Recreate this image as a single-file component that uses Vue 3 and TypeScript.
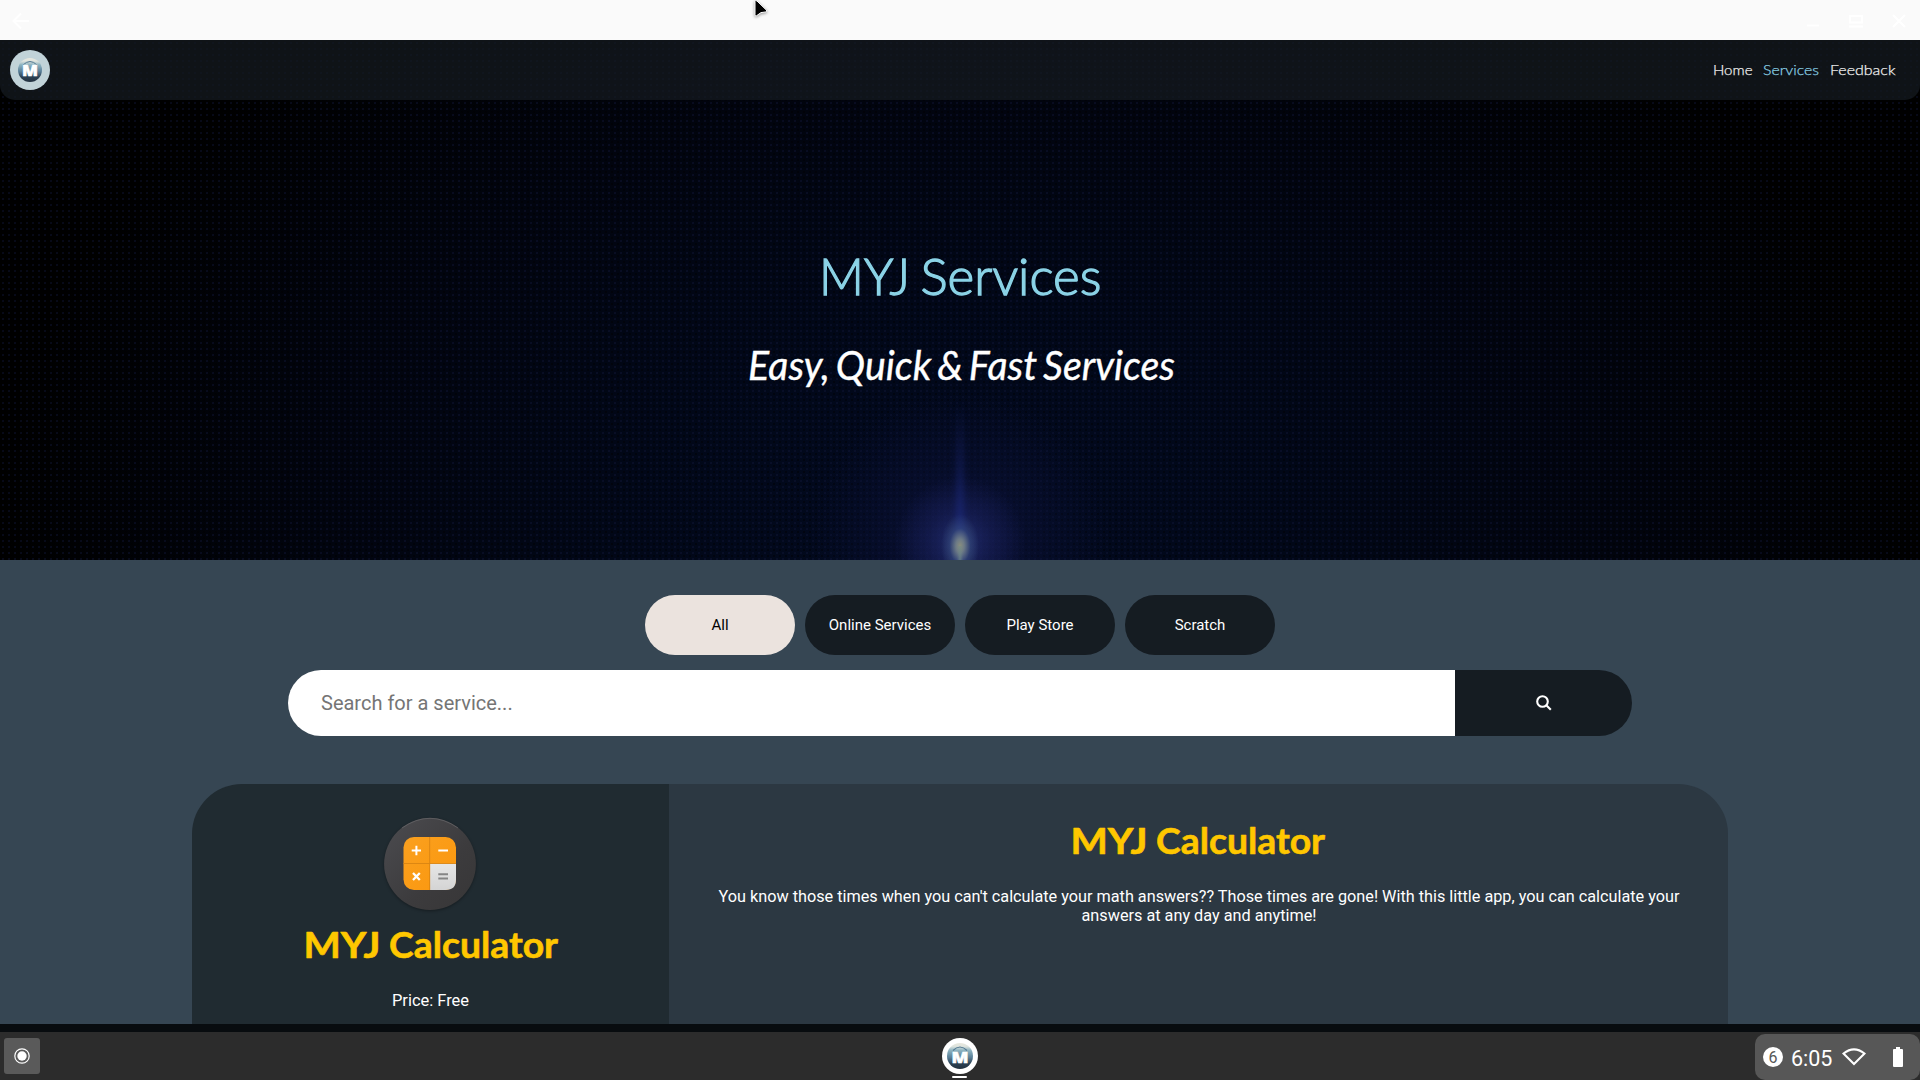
<script setup lang="ts">
import { ref } from 'vue'

interface NavLink { label: string; width: number; active?: boolean }

const links: NavLink[] = [
  { label: 'Home', width: 39.5 },
  { label: 'Services', width: 56, active: true },
  { label: 'Feedback', width: 65.5 },
]
const filters: string[] = ['All', 'Online Services', 'Play Store', 'Scratch']
const selected = ref('All')
const query = ref('')
</script>

<template>
  <div class="screen">
    <header class="titlebar">
      <svg class="back" width="18" height="18" viewBox="0 0 18 18"><path d="M17 9H2M9 1.500L1.500 9L9 16.500" /></svg>
      <div class="window-controls">
        <svg width="14" height="16" viewBox="0 0 14 16"><path d="M1 12.500H13" /></svg>
        <svg width="14" height="16" viewBox="0 0 14 16"><path d="M1 3H13V9.500H1ZM0 13.500H14" /></svg>
        <svg width="14" height="16" viewBox="0 0 14 16"><path d="M1 2L13 14M13 2L1 14" /></svg>
      </div>
      <svg class="cursor" width="20" height="22" viewBox="0 0 20 22">
        <path d="M2 1.500V14.800Q2 16.500 3.600 15.700L8 12.600L13 11.900Q14.600 11.300 13.300 10L4 1Q2 -0.500 2 1.500Z" />
      </svg>
    </header>

    <main class="page">
      <section class="hero">
        <div class="grid-dots"></div>
        <div class="glow"></div>
        <div class="beam"></div>
        <div class="core"></div>
        <nav class="nav">
          <svg width="40" height="40" viewBox="0 0 40 40">
            <defs>
              <linearGradient id="orb" x1="0" y1="0" x2="0" y2="1">
                <stop offset="0" stop-color="#e9e8de" />
                <stop offset=".13" stop-color="#dfe4de" />
                <stop offset=".28" stop-color="#8fb4c1" />
                <stop offset=".55" stop-color="#5b8199" />
                <stop offset=".8" stop-color="#2b4052" />
                <stop offset="1" stop-color="#22313f" />
              </linearGradient>
            </defs>
            <circle cx="20" cy="20" r="20" fill="#c1d3d8" />
            <circle cx="20" cy="20" r="12" fill="url(#orb)" />
            <path d="M13 15Q20 8 27 15" fill="none" stroke="#527891" stroke-width="1" />
            <text class="orb-letter" x="12" y="25.800" textLength="16" lengthAdjust="spacingAndGlyphs">M</text>
          </svg>
          <div class="links">
            <svg v-for="l in links" :key="l.label" :width="l.width" height="24" :class="{ active: l.active }">
              <text x="0" y="17.200" :textLength="l.width" lengthAdjust="spacingAndGlyphs">{{ l.label }}</text>
            </svg>
          </div>
        </nav>
        <div class="hero-copy">
          <svg class="title" width="286" height="60">
            <text x="0" y="45" textLength="91" lengthAdjust="spacingAndGlyphs">MYJ</text>
            <text x="101.500" y="45" textLength="181" lengthAdjust="spacingAndGlyphs">Services</text>
          </svg>
          <svg class="subtitle" width="427" height="50">
            <text x="0" y="34.700" textLength="427" lengthAdjust="spacingAndGlyphs">Easy, Quick &amp; Fast Services</text>
          </svg>
        </div>
      </section>

      <section class="content">
        <div class="filters">
          <button v-for="f in filters" :key="f" :class="{ on: f === selected }" @click="selected = f">{{ f }}</button>
        </div>
        <form class="search" @submit.prevent>
          <input v-model="query" type="text" placeholder="Search for a service..." />
          <button type="submit" aria-label="Search">
            <svg width="16" height="16" viewBox="0 0 16 16"><circle cx="6.500" cy="6.500" r="5.300" /><path d="M10.300 10.300L14.800 14.800" /></svg>
          </button>
        </form>
        <article class="card">
          <div class="card-side">
            <svg class="app-icon" width="100" height="100" viewBox="0 0 100 100">
              <defs>
                <linearGradient id="disc" x1="0" y1="0" x2="1" y2="1">
                  <stop offset="0" stop-color="#4c4c50" /><stop offset=".6" stop-color="#3c3b3d" /><stop offset="1" stop-color="#373637" />
                </linearGradient>
                <linearGradient id="amber" x1="0" y1="0" x2="1" y2="1">
                  <stop offset="0" stop-color="#faa01f" /><stop offset="1" stop-color="#fb970d" />
                </linearGradient>
                <linearGradient id="silver" x1="0" y1="0" x2="0" y2="1">
                  <stop offset="0" stop-color="#e6e6e6" /><stop offset="1" stop-color="#d4d4d4" />
                </linearGradient>
              </defs>
              <circle cx="50" cy="50" r="45.900" fill="url(#disc)" />
              <path d="M22 14Q50 -5.500 78 14" fill="none" stroke="#6a696b" stroke-width=".7" />
              <rect x="23.500" y="23" width="52.500" height="53" rx="10.500" fill="url(#amber)" />
              <path d="M50 49.500H76V65.500Q76 76 65.500 76H50Z" fill="url(#silver)" />
              <path d="M49.700 23V76M23.500 49.500H76" stroke="#d98412" stroke-width=".9" />
              <g fill="none" stroke="#fff" stroke-width="2">
                <path d="M31.700 36.500H41M36.400 31.700V41.300M58.300 36.500H68" />
                <path d="M33 59L39.800 66M39.800 59L33 66" stroke-width="2.300" />
                <path d="M58.300 60.200H68M58.300 64.500H68" stroke="#858585" stroke-width="2" />
              </g>
            </svg>
            <svg class="app-name" width="258" height="44">
              <text x="0.500" y="30" textLength="77" lengthAdjust="spacingAndGlyphs">MYJ</text>
              <text x="86" y="30" textLength="169" lengthAdjust="spacingAndGlyphs">Calculator</text>
            </svg>
            <svg class="copy price" width="77" height="20">
              <text x="0" y="15" textLength="77" lengthAdjust="spacingAndGlyphs">Price: Free</text>
            </svg>
          </div>
          <div class="card-main">
            <svg class="app-name" width="258" height="44">
              <text x="0.500" y="30" textLength="77" lengthAdjust="spacingAndGlyphs">MYJ</text>
              <text x="86" y="30" textLength="169" lengthAdjust="spacingAndGlyphs">Calculator</text>
            </svg>
            <svg class="copy blurb" width="962" height="40">
              <text x="0.500" y="14" textLength="961" lengthAdjust="spacingAndGlyphs">You know those times when you can't calculate your math answers?? Those times are gone! With this little app, you can calculate your</text>
              <text x="363.500" y="33" textLength="235" lengthAdjust="spacingAndGlyphs">answers at any day and anytime!</text>
            </svg>
          </div>
        </article>
      </section>
    </main>

    <footer class="shelf">
      <div class="launcher">
        <svg width="16" height="16" viewBox="0 0 16 16"><circle cx="8" cy="8" r="7.200" fill="none" stroke="#fff" stroke-width="1.200" /><circle cx="8" cy="8" r="4.700" fill="#fff" /></svg>
      </div>
      <svg class="pinned" width="36" height="42" viewBox="0 0 36 42">
        <circle cx="18" cy="18" r="18" fill="#fff" />
        <circle cx="18" cy="18" r="13" fill="url(#orb)" />
        <path d="M11 12.500Q18 5.500 25 12.500" fill="none" stroke="#527891" stroke-width="1.100" />
        <text class="orb-letter" x="9.500" y="24.600" textLength="17" lengthAdjust="spacingAndGlyphs">M</text>
        <rect x="10" y="38" width="15" height="2" rx="1" fill="#fff" />
      </svg>
      <div class="tray">
        <span class="badge">6</span>
        <span class="clock">6:05</span>
        <svg class="wifi" width="24" height="18" viewBox="0 0 24 18"><path d="M1.500 5.500Q12 -2.700 22.500 5.500L12 16Z" /></svg>
        <svg class="battery" width="10" height="20" viewBox="0 0 10 20"><path d="M3 0H7V2H9Q10 2 10 3V19Q10 20 9 20H1Q0 20 0 19V3Q0 2 1 2H3Z" /></svg>
      </div>
    </footer>
  </div>
</template>

<style>
body { margin: 0; overflow: hidden; }
</style>

<style scoped>
.screen {
  width: 1920px;
  height: 1080px;
  display: flex;
  flex-direction: column;
  overflow: hidden;
  background: #080c0f;
  font-family: Roboto, sans-serif;
}
svg { display: block; overflow: visible; flex: none; }
.titlebar {
  position: relative;
  flex: none;
  height: 40px;
  background: #fafafa;
  display: flex;
  align-items: center;
  justify-content: space-between;
  padding: 2px 14px 0 12px;
  box-sizing: border-box;
}
.titlebar path { fill: none; stroke: #fff; stroke-width: 2; }
.window-controls { display: flex; gap: 29px; }
.titlebar .cursor { position: absolute; left: 753px; top: 0; filter: drop-shadow(0 1px 1.500px rgba(0, 0, 0, .4)); }
.titlebar .cursor path { fill: #000; stroke: #fff; stroke-width: 1; }
.page { height: 984px; overflow: hidden; background: #364653; }
.hero {
  position: relative;
  height: 520px;
  overflow: hidden;
  background: radial-gradient(ellipse 960px 640px at 50% 92%, #020a20 0%, #010717 35%, #01040e 66%, #000 100%);
}
.glow, .beam, .core, .grid-dots { position: absolute; inset: 0; }
.glow {
  background:
    radial-gradient(ellipse 65px 65px at 960px 502px, rgba(42, 54, 125, .6) 0%, rgba(34, 42, 108, .3) 50%, transparent 100%),
    radial-gradient(ellipse 150px 150px at 960px 500px, rgba(21, 27, 88, .7) 0%, rgba(12, 18, 58, .45) 45%, transparent 100%);
}
.beam {
  left: 951px;
  right: auto;
  width: 18px;
  top: 360px;
  background: linear-gradient(90deg, transparent, rgba(28, 42, 125, .65) 50%, transparent);
  mask-image: linear-gradient(transparent, #000 85%);
}
.core {
  background:
    linear-gradient(90deg, transparent 957px, rgba(110, 138, 135, .6) 960px, transparent 963px) 0 506px / 100% 14px no-repeat,
    radial-gradient(ellipse 19px 32px at 960px 506px, rgba(138, 142, 126, 1) 0%, rgba(122, 136, 138, .85) 22%, rgba(68, 95, 140, .4) 55%, transparent 100%);
}
.grid-dots {
  background-image: radial-gradient(circle, rgba(18, 24, 60, .4) 0.700px, transparent 1.300px), radial-gradient(circle, rgba(0, 0, 0, .4) 0.800px, transparent 1.300px);
  background-size: 6px 6px;
  background-position: 0 0, 3px 3px;
}
.nav {
  position: relative;
  height: 60px;
  box-sizing: border-box;
  padding: 0 25px 0 10px;
  display: flex;
  align-items: center;
  justify-content: space-between;
  background: rgba(21, 27, 32, .72);
  border-radius: 0 0 15px 15px;
}
.links { display: flex; gap: 10.500px; font: 300 14.500px Lato, sans-serif; }
.links text { fill: #eee; stroke: #eee; stroke-width: .25; }
.links .active text { fill: #89cfe3; stroke: #89cfe3; }
.orb-letter { font: 900 16px "Open Sans", sans-serif; fill: #fff; stroke: #fff; stroke-width: .5; }
.hero-copy {
  position: relative;
  display: flex;
  flex-direction: column;
  align-items: center;
  gap: 35px;
  padding: 150px 0 0 3px;
}
.title { font: 300 51.500px Lato, sans-serif; fill: #8bd3e6; stroke: #8bd3e6; stroke-width: 1.300; }
.subtitle { font: italic 400 41.500px Lato, sans-serif; word-spacing: -3.500px; fill: #fff; stroke: #fff; stroke-width: .4; }
.content { padding-top: 35px; display: flex; flex-direction: column; align-items: center; }
.filters { display: flex; gap: 10px; }
.filters button {
  width: 150px;
  height: 60px;
  padding: 0;
  border: 0;
  border-radius: 30px;
  background: #151c22;
  color: #fff;
  font: 400 15px Roboto, sans-serif;
}
.filters button.on { background: #ebe3de; color: #000; }
.search { display: flex; width: 1344px; height: 66px; margin: 15px 0 48px; border-radius: 33px; overflow: hidden; }
.search input {
  flex: 1;
  min-width: 0;
  box-sizing: border-box;
  border: 0;
  padding: 0 33px;
  background: #fff;
  font: 400 20px Roboto, sans-serif;
}
.search input::placeholder { color: #757575; }
.search button { width: 177px; border: 0; padding: 0 0 1px; background: #151c22; display: flex; align-items: center; justify-content: center; }
.search svg { fill: none; stroke: #fff; stroke-width: 2.100; }
.card { display: flex; width: 1536px; height: 500px; border-radius: 50px; overflow: hidden; }
.card-side, .card-main { display: flex; flex-direction: column; align-items: center; box-sizing: border-box; }
.card-side { width: 477px; padding-top: 30px; background: #202b31; }
.card-main { flex: 1; padding-top: 40px; background: #2c3842; }
.app-icon { margin-right: 1px; filter: drop-shadow(0 1px 1.500px rgba(0, 0, 0, .35)); }
.card-side .app-name { margin-top: 14px; margin-left: 3px; }
.app-name { font: 700 36.500px Lato, sans-serif; fill: #ffc700; stroke: #ffc700; stroke-width: .6; stroke-linejoin: round; }
.copy { font: 400 16px Roboto, sans-serif; fill: #fff; }
.price { margin-top: 19px; }
.blurb { margin-top: 20px; }
.shelf {
  flex: none;
  height: 48px;
  margin-top: 8px;
  background: #2c2c2c;
  display: grid;
  grid-template-columns: 1fr 36px 1fr;
  align-items: start;
}
.launcher {
  width: 36px;
  height: 36px;
  margin: 6px 0 0 4px;
  border-radius: 3px;
  background: #5a5a5a;
  display: flex;
  align-items: center;
  justify-content: center;
}
.pinned { margin-top: 6px; }
.tray {
  justify-self: end;
  width: 165px;
  height: 46px;
  margin-top: 2px;
  box-sizing: border-box;
  padding-left: 8px;
  border-radius: 10px;
  background: #575757;
  display: flex;
  align-items: center;
  color: #fff;
}
.badge { width: 20px; height: 20px; border-radius: 50%; background: #fff; color: #575757; font-size: 16px; line-height: 22px; text-align: center; }
.clock { width: 42px; margin-left: 8px; font-size: 21.500px; line-height: 24px; padding-top: 4px; white-space: nowrap; }
.wifi { margin-left: 9px; fill: none; stroke: #fff; stroke-width: 2; }
.battery { margin-left: 27px; fill: #fff; }
</style>
